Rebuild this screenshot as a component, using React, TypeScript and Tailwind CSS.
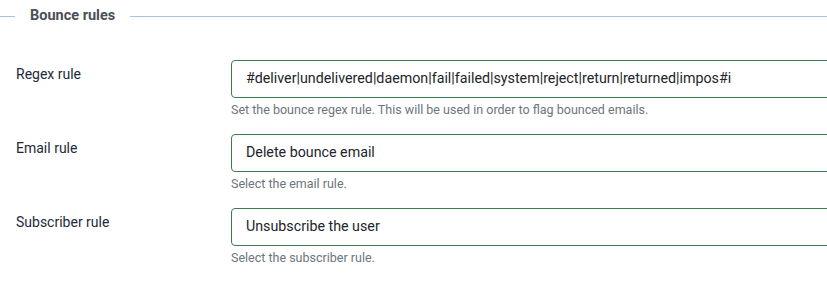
const rows = [
  { label: 'Regex rule', value: '#deliver|undelivered|daemon|fail|failed|system|reject|return|returned|impos#i', help: 'Set the bounce regex rule. This will be used in order to flag bounced emails.' },
  { label: 'Email rule', value: 'Delete bounce email', help: 'Select the email rule.' },
  { label: 'Subscriber rule', value: 'Unsubscribe the user', help: 'Select the subscriber rule.' },
];

export default function App() {
  return (
    <div className="w-[827px] h-[293px] bg-white overflow-hidden" style={{ fontFamily: 'Roboto, "Liberation Sans", sans-serif' }}>
      <div className="flex items-center h-8">
        <div className="w-[15px] h-px bg-[#a9c3e3]" />
        <span className="px-[15px] text-[14.5px] font-bold text-[#495057]">Bounce rules</span>
        <div className="flex-1 h-px bg-[#a9c3e3]" />
      </div>
      <div className="pt-7">
        {rows.map(r => (
          <div key={r.label} className="flex h-[74px]">
            <div className="w-[231px] shrink-0 pl-4 pt-1 text-[14px] leading-5 text-[#1e2a3a]">{r.label}</div>
            <div className="flex-1 -mr-4">
              <div className="h-[38px] border border-[#3c7a50] rounded-[4px] flex items-center pl-[14px] text-[14.25px] text-[#212529] whitespace-nowrap overflow-hidden">
                {r.value}
              </div>
              <div className="mt-1 text-[12.5px] leading-4 text-[#6c757d]">{r.help}</div>
            </div>
          </div>
        ))}
      </div>
    </div>
  );
}
